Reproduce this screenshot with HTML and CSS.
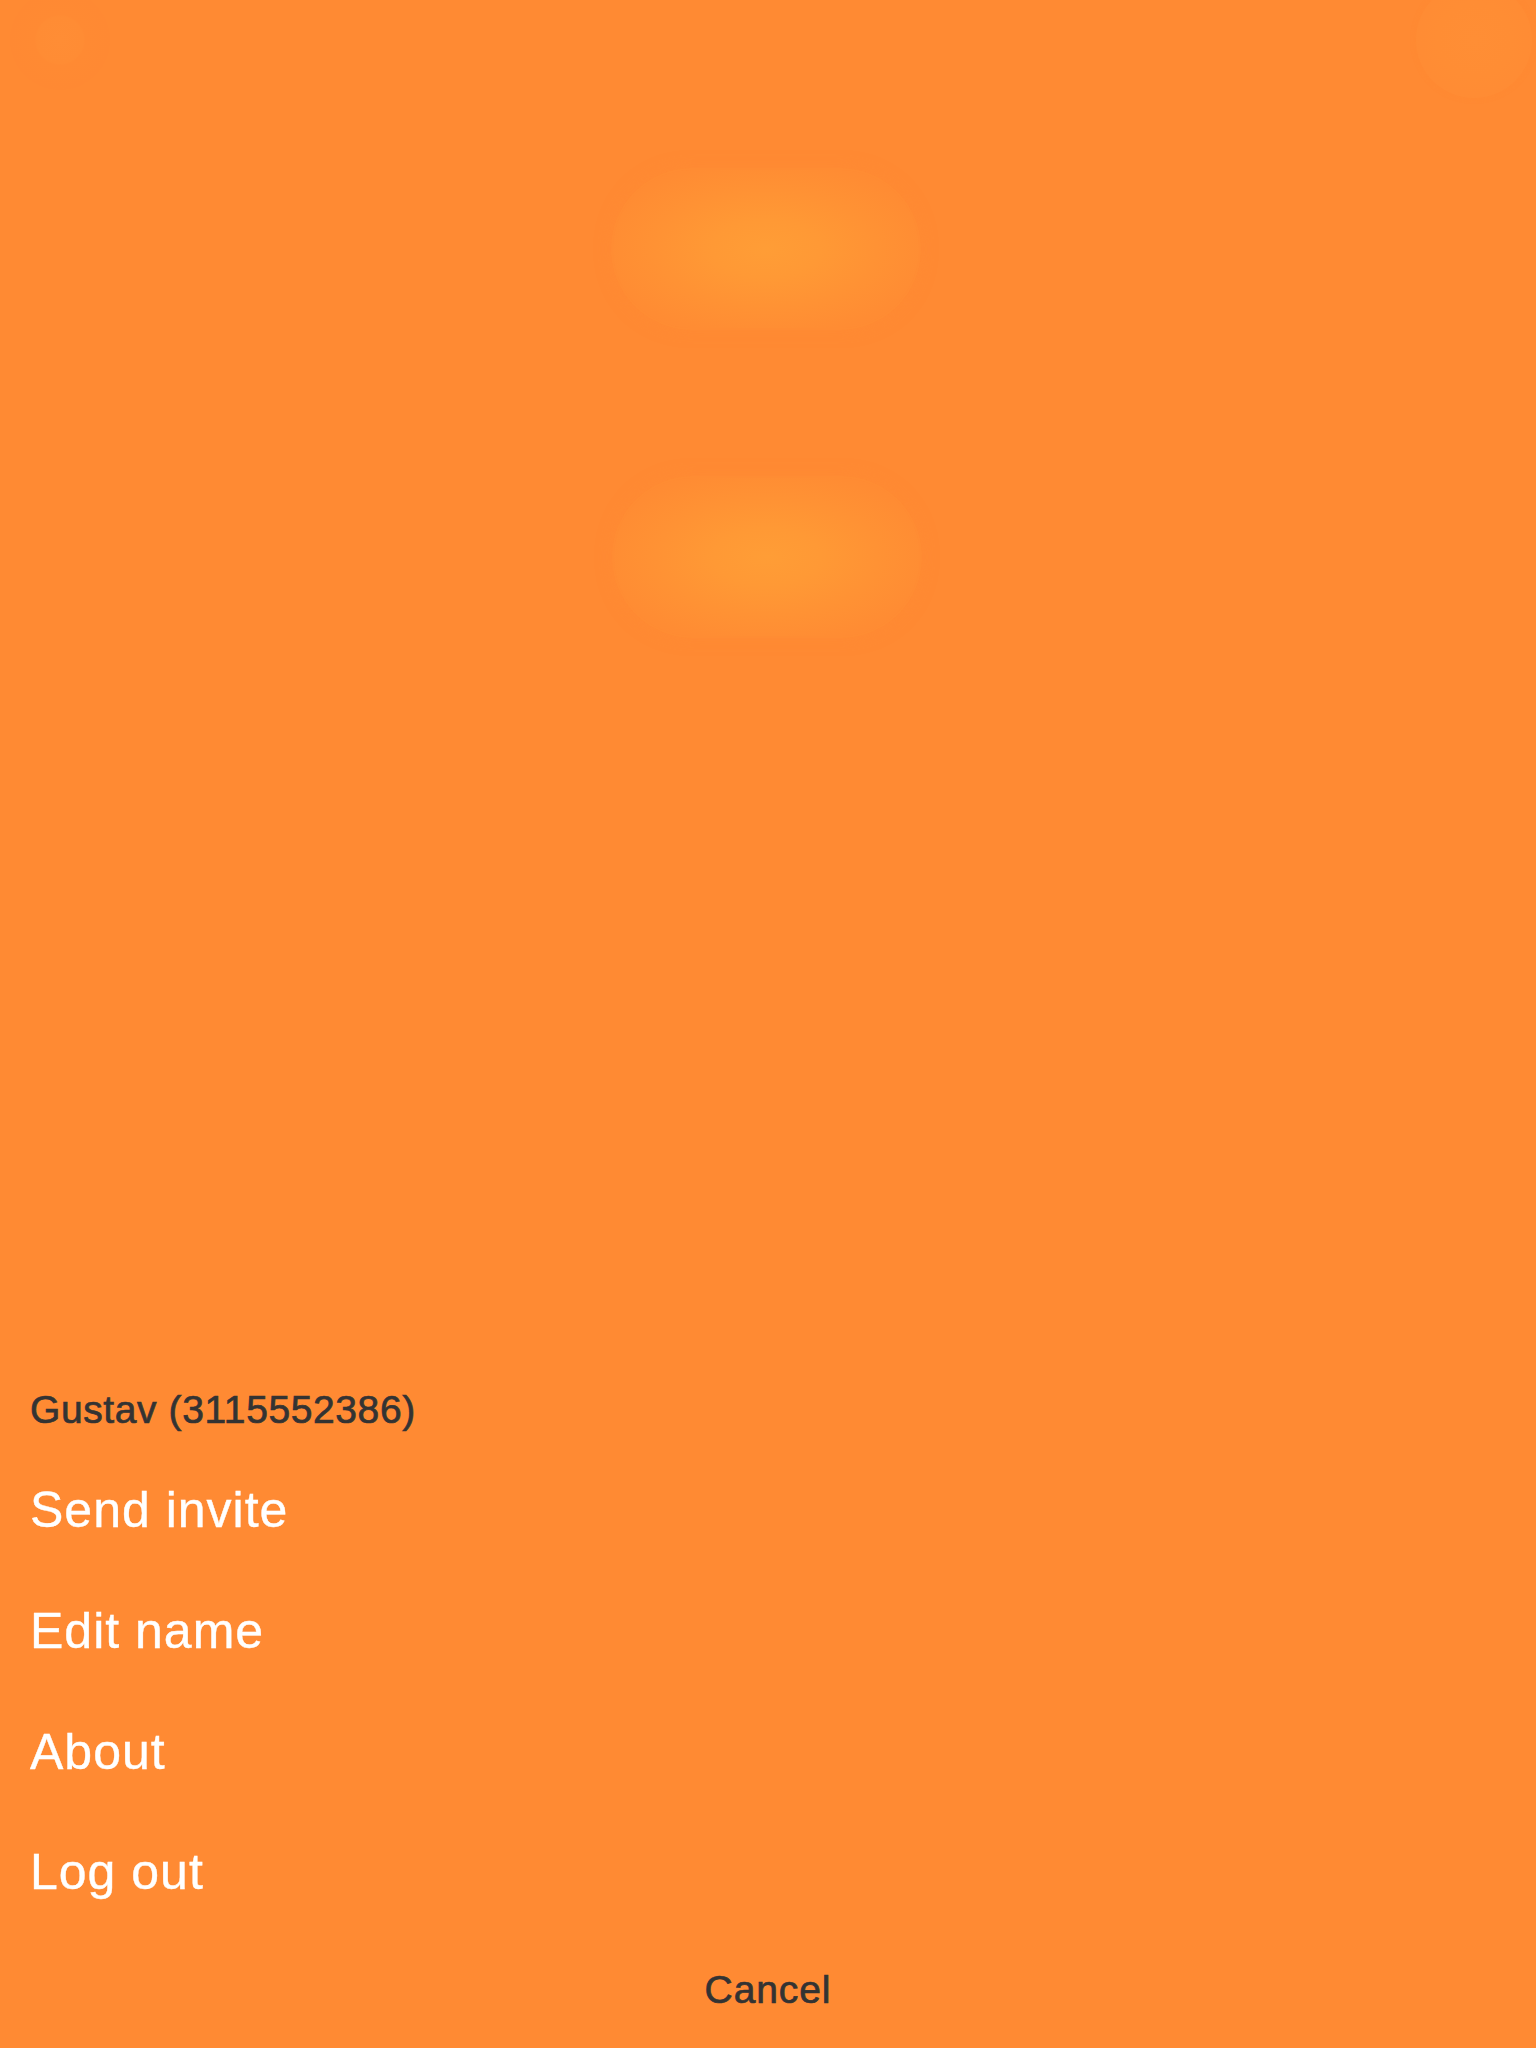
FILE: index.html
```html
<!DOCTYPE html>
<html lang="en">
<head>
<meta charset="utf-8">
<title>Menu</title>
<link rel="stylesheet" href="styles.css">
</head>
<body>
<div class="screen">
  <div class="topbar">
    <div class="orb orb-left"></div>
    <div class="orb orb-right"></div>
  </div>
  <div class="glows">
    <div class="glow glow-first"></div>
    <div class="glow glow-second"></div>
  </div>
  <div class="spacer"></div>
  <div class="sheet">
    <div class="sheet-title">Gustav (3115552386)</div>
    <ul class="actions">
      <li class="action">Send invite</li>
      <li class="action">Edit name</li>
      <li class="action">About</li>
      <li class="action">Log out</li>
    </ul>
    <div class="cancel">Cancel</div>
  </div>
</div>
</body>
</html>
```

FILE: styles.css
```css
html, body {
  margin: 0;
  padding: 0;
  background: #ff8a33;
}

.screen {
  width: 1536px;
  height: 2048px;
  display: flex;
  flex-direction: column;
  background: #ff8a33;
  font-family: "Liberation Sans", Arial, sans-serif;
  overflow: hidden;
}

.topbar {
  height: 100px;
  display: flex;
  justify-content: space-between;
  align-items: flex-start;
}

.orb {
  border-radius: 50%;
}

.orb-left {
  width: 100px;
  height: 100px;
  margin-left: 10px;
  margin-top: -10px;
  background: radial-gradient(circle at center, #ff8d35 0%, #ff8c34 33%, #ff8a33 36%, #ff8933 70%, #ff8a33 100%);
}

.orb-right {
  width: 116px;
  height: 116px;
  margin-right: 4px;
  margin-top: -18px;
  background: radial-gradient(circle at center, #ff8e35 0%, #ff8d34 45%, #ff8b34 85%, #ff8a33 100%);
  box-shadow: 0 0 4px 1px rgba(255, 137, 50, 0.8);
}

.glows {
  display: flex;
  flex-direction: column;
  align-items: center;
}

.glow {
  width: 306px;
  height: 158px;
  border-radius: 79px;
  background: radial-gradient(ellipse 58% 60% at center, #ff9d36 0%, #ff9935 30%, #ff9234 62%, #ff8c33 92%, #ff8b33 100%);
  box-shadow: 0 0 0 2px rgba(255, 142, 52, 0.6), 0 0 14px 4px rgba(255, 140, 52, 0.5);
}

.glow-first {
  margin-top: 70px;
  margin-left: -4px;
}

.glow-second {
  margin-top: 150px;
  margin-left: -2px;
}

.spacer {
  flex: 1;
}

.sheet {
  display: flex;
  flex-direction: column;
  padding: 0 0 34px 30px;
}

.sheet-title {
  font-size: 39px;
  line-height: 48px;
  color: #333333;
  letter-spacing: 0.6px;
  -webkit-text-stroke: 0.7px #333333;
  margin-bottom: 16px;
}

.actions {
  list-style: none;
  margin: 0;
  padding: 0;
}

.action {
  font-size: 50px;
  line-height: 120.7px;
  color: #ffffff;
  letter-spacing: 1px;
  -webkit-text-stroke: 0.4px #ffffff;
}

.cancel {
  margin-top: 33px;
  margin-left: -30px;
  text-align: center;
  font-size: 39px;
  line-height: 48px;
  color: #333333;
  letter-spacing: 0.9px;
  -webkit-text-stroke: 0.7px #333333;
}
```
